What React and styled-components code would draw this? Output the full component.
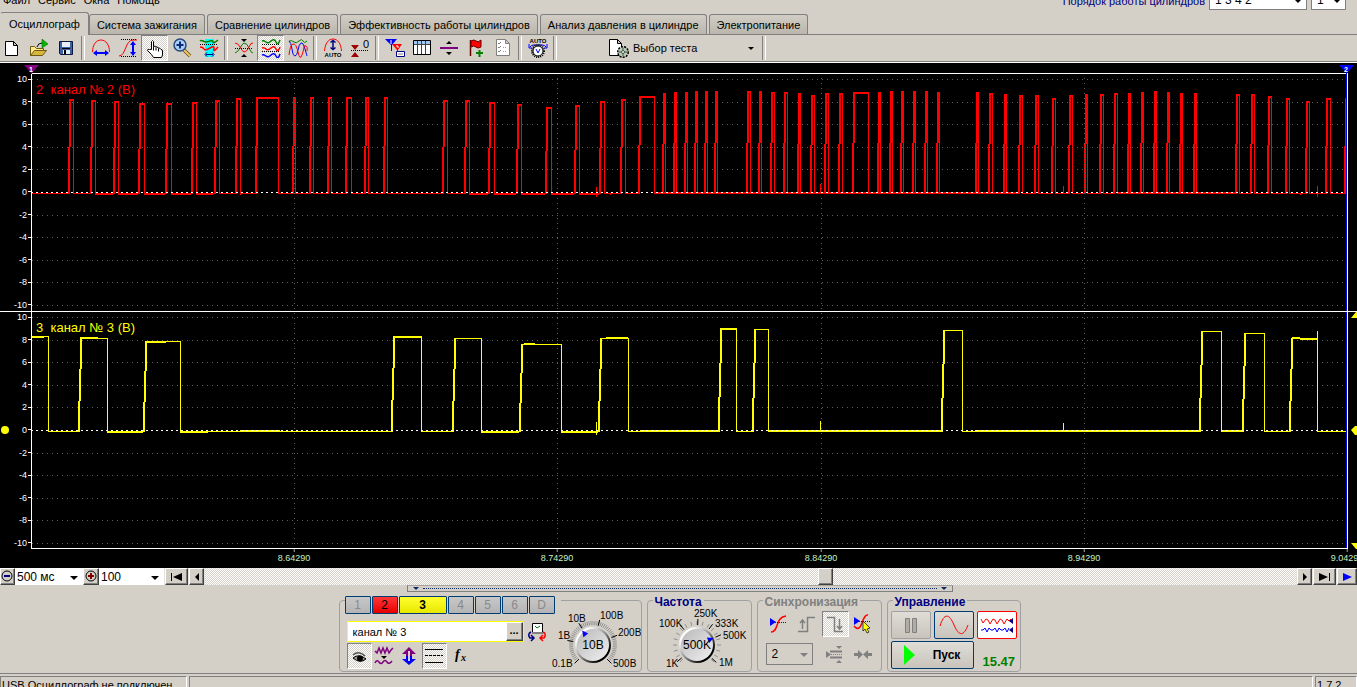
import React, { useState } from 'react';
import styled, { createGlobalStyle, css } from 'styled-components';

const GlobalStyle = createGlobalStyle`
  * {
    box-sizing: border-box;
  }

  body {
    margin: 0;
    background: #d4d0c8;
    font-family: "Liberation Sans", Arial, sans-serif;
    font-size: 11px;
    color: #000;
  }

  button, input, select {
    font: inherit;
    color: inherit;
    margin: 0;
  }
`;

const dither = css`
  background: repeating-conic-gradient(#ffffff 0 25%, #d4d0c8 0 50%) 0 0 / 2px 2px;
`;

const raised = css`
  background: #d4d0c8;
  border: 1px solid;
  border-color: #ffffff #404040 #404040 #ffffff;
  box-shadow: inset -1px -1px 0 #808080;
`;

const Window = styled.div`
  height: 100vh;
  overflow: hidden;
  display: flex;
  flex-direction: column;

  > * {
    flex-shrink: 0;
  }
`;

/* ---------- header ---------- */

const Header = styled.header`
  height: 12px;
  padding: 0 11px 2px 3px;
  display: flex;
  align-items: flex-end;
  justify-content: space-between;
`;

const Menu = styled.nav`
  display: flex;
  gap: 8px;
  margin-bottom: 4px;
  font-size: 11px;
  line-height: 12px;

  a {
    color: #000;
    text-decoration: none;
  }
`;

const OrderGroup = styled.div`
  display: flex;
  align-items: flex-end;
  gap: 4px;
  color: #000080;

  label {
    line-height: 12px;
    margin-bottom: 3px;
  }
`;

const SelectBox = styled.span`
  position: relative;
  display: block;
  width: ${props => props.$width}px;
  height: ${props => props.$height}px;

  &::after {
    content: '';
    position: absolute;
    right: 5px;
    top: 50%;
    margin-top: -1px;
    border: 4px solid transparent;
    border-top-color: ${props => props.$muted ? '#808080' : '#000'};
    border-bottom: 0;
    pointer-events: none;
  }

  select, input {
    display: block;
    width: 100%;
    height: 100%;
    appearance: none;
    border: ${props => props.$flat ? '0' : '1px solid #808080'};
    border-radius: 0;
    padding: 0 0 0 ${props => props.$flat ? 2 : 5}px;
    background: ${props => props.$muted ? '#d4d0c8' : '#fff'};
    color: #000;
    font-size: 12px;
    opacity: 1;
    outline: 0;
  }
`;

/* ---------- tabs ---------- */

const TabBar = styled.div`
  height: 23px;
  display: flex;
  align-items: flex-end;
  gap: 2px;
  border-bottom: 1px solid #808080;
`;

const Tab = styled.button`
  height: ${props => props.$active ? 23 : 20}px;
  margin: ${props => props.$active ? '0 -2px -1px 0' : '0'};
  padding: 0 ${props => props.$active ? 8 : 7}px;
  white-space: nowrap;
  border: 1px solid #808080;
  border-bottom: 0;
  border-left-color: ${props => props.$active ? '#d4d0c8' : '#808080'};
  border-radius: 3px 3px 0 0;
  background: ${props => props.$active ? '#d4d0c8' : 'linear-gradient(#d2cec6, #bab6ac)'};
`;

/* ---------- toolbar ---------- */

const Toolbar = styled.div`
  height: 28px;
  display: flex;
  align-items: center;
  border-bottom: 1px solid #fff;
  box-shadow: inset 0 -1px 0 #808080;
  margin-left: -2px;
  padding-bottom: 1px;
`;

const ToolButton = styled.button`
  width: ${props => props.$width || 27}px;
  height: 26px;
  padding: 0;
  display: flex;
  align-items: center;
  justify-content: center;
  border: 1px solid transparent;
  background: none;

  ${props => props.$pressed && css`
    ${dither}
    border-color: #808080 #fff #fff #808080;
  `}
`;

const Separator = styled.span`
  width: 8px;
  height: 24px;
  display: flex;
  justify-content: center;

  &::before {
    content: '';
    width: 2px;
    border-left: 1px solid #808080;
    border-right: 1px solid #fff;
  }
`;

const TestButton = styled.button`
  width: 201px;
  height: 26px;
  padding: 0 6px 0 50px;
  display: flex;
  align-items: center;
  gap: 4px;
  border: 0;
  background: none;

  span {
    flex: 1;
    text-align: left;
  }
`;

const DownArrow = styled.i`
  border: 3px solid transparent;
  border-top-color: #000;
  border-bottom: 0;
`;

/* ---------- plot ---------- */

const Plot = styled.section`
  position: relative;
  background: #000;
  padding-top: 10px;
  overflow: hidden;
`;

const Channel = styled.div`
  position: relative;
  display: grid;
  grid-template-columns: 31px 1fr 9px;
  height: 238px;

  &::before {
    content: '';
    position: absolute;
    top: 0;
    left: ${props => props.$first ? 31 : 0}px;
    right: ${props => props.$first ? 9 : 0}px;
    height: 1px;
    background: #fff;
  }
`;

const Scale = styled.ol`
  margin: 0;
  padding: 0;
  list-style: none;
  display: flex;
  flex-direction: column;
  justify-content: space-between;
  color: #fff;
  font-size: 9px;
  line-height: 12px;

  li {
    display: flex;
    align-items: center;
    justify-content: flex-end;
    gap: 1px;
    height: 12px;
  }

  li::after {
    content: '';
    width: 3px;
    height: 1px;
    background: #fff;
  }
`;

const Trace = styled.svg`
  display: block;
  width: 100%;
  height: 238px;
`;

const ChannelName = styled.span`
  position: absolute;
  left: 36px;
  top: 9px;
  color: ${props => props.$color};
  font-size: 13px;
  line-height: 16px;
  white-space: pre;
`;

const TimeAxis = styled.div`
  position: relative;
  height: 19px;
  margin: 0 9px 0 31px;
`;

const TimeMark = styled.span`
  position: absolute;
  top: 0;
  transform: translateX(-50%);
  padding-top: 4px;
  color: #c8f0c0;
  font-size: 9px;
  line-height: 11px;

  &::before {
    content: '';
    position: absolute;
    top: 0;
    left: 50%;
    width: 1px;
    height: 3px;
    background: #a0a0a0;
  }
`;

const Cursor = styled.svg`
  position: absolute;
  top: 2px;
  ${props => props.$side}: ${props => props.$offset}px;
`;

const LevelMark = styled.svg`
  position: absolute;
  ${props => props.$side}: 0;
  top: ${props => props.$top}px;
`;

/* ---------- time scroll ---------- */

const ScrollRow = styled.div`
  height: 17px;
  display: flex;
  gap: 1px;
  background: #e4e2dc;
`;

const SmallButton = styled.button`
  ${raised}
  width: ${props => props.$width}px;
  height: 17px;
  padding: 0;
  display: flex;
  align-items: center;
  justify-content: center;
`;

const ScrollBar = styled.input`
  flex: 1;
  min-width: 0;
  height: 17px;
  appearance: none;
  ${dither}

  &::-webkit-slider-thumb {
    appearance: none;
    width: 15px;
    height: 17px;
    ${raised}
  }
`;

/* ---------- control panels ---------- */

const Controls = styled.main`
  height: 89px;
  padding-left: 2px;
  display: flex;
  flex-direction: column;
  align-items: center;
  border-bottom: 1px solid #808080;
`;

const Splitter = styled.div`
  width: 546px;
  max-width: 100%;
  height: 7px;
  padding: 0 5px;
  display: flex;
  align-items: center;
  gap: 4px;
  border: 1px solid #808080;
  border-top-color: #a8a49c;

  &::before, &::after {
    content: '';
    border: 3px solid transparent;
    border-top-color: #0a246a;
    border-bottom: 0;
  }

  span {
    flex: 1;
    border-top: 1px dotted #0a246a;
  }
`;

const Panels = styled.div`
  margin-top: 8px;
  display: flex;
  gap: 5px;
`;

const Panel = styled.fieldset`
  position: relative;
  width: ${props => props.$width}px;
  height: 72px;
  min-width: 0;
  margin: 0;
  padding: ${props => props.$pad || '10px 3px 0'};
  border: 1px solid #a0a0a0;
  border-radius: 4px;
`;

const Legend = styled.legend`
  position: absolute;
  top: -6px;
  left: 5px;
  padding: 0 2px;
  background: #d4d0c8;
  color: ${props => props.$color};
  font-size: 12px;
  font-weight: bold;
  line-height: 14px;
`;

const ChannelTabs = styled.div`
  position: absolute;
  top: -5px;
  left: 5px;
  padding-right: 6px;
  display: flex;
  gap: 1px;
  background: #d4d0c8;
`;

const ChannelTab = styled.button`
  width: ${props => props.$selected ? 48 : 26}px;
  height: 18px;
  padding: 0;
  border: 1px solid #003c74;
  border-radius: 1px;
  background: ${props => props.$fill || 'linear-gradient(#c8c8c8, #b4b4b4)'};
  color: ${props => props.$fill ? '#000' : '#8a8a8a'};
  font-size: 12px;
  font-weight: ${props => props.$selected ? 'bold' : 'normal'};
  line-height: 16px;
`;

const ChannelBody = styled.div`
  display: flex;
  justify-content: space-between;
`;

const Stack = styled.div`
  display: flex;
  flex-direction: column;
  gap: ${props => props.$gap}px;
  padding: ${props => props.$pad};
`;

const Row = styled.div`
  display: flex;
  align-items: center;
  gap: ${props => props.$gap || 0}px;
`;

const NameField = styled.div`
  width: 177px;
  height: 21px;
  display: flex;
  border: 1px solid #ffff00;
  background: #fff;

  input {
    flex: 1;
    min-width: 0;
    padding: 0 0 0 5px;
    border: 0;
    background: none;
    outline: 0;
  }

  button {
    ${raised}
    width: 17px;
    padding: 0 0 4px;
    font-weight: bold;
    line-height: 10px;
  }
`;

const Dial = styled.svg`
  display: block;
  font-size: 10px;
`;

const FlatButton = styled.button`
  width: ${props => props.$width || 40}px;
  height: 28px;
  padding: 0;
  display: flex;
  align-items: center;
  justify-content: center;
  gap: 18px;
  border: 1px solid ${props => props.$edge || '#003c74'};
  border-radius: 2px;
  background: ${props => props.$white ? '#fff' : 'linear-gradient(#e0ddd7, #c8c4bc)'};
  font-size: 12px;
  font-weight: bold;
`;

const ControlGrid = styled.div`
  display: grid;
  grid-template-columns: 40px 40px 40px;
  gap: 2px 3px;

  > :nth-child(4) {
    grid-column: span 2;
  }
`;

const Voltage = styled.output`
  align-self: end;
  padding-left: 6px;
  color: #008000;
  font-size: 13px;
  font-weight: bold;
`;

/* ---------- status ---------- */

const StatusBar = styled.footer`
  height: 22px;
  padding-top: 2px;
  display: grid;
  grid-template-columns: 187px 1fr 42px;
  gap: 2px;

  span {
    padding: 2px 1px;
    line-height: 12px;
    border: 1px solid;
    border-color: #808080 #fff #fff #808080;
    white-space: nowrap;
  }
`;

/* ---------- icons ---------- */

const glyphs = {
  page: (
    <path d="M3.500 3.500h8l4 4v10h-12zM11.500 3.500v4h4" fill="#fff" stroke="#000" />
  ),
  open: (
    <>
      <path d="M1.500 17.500v-9h4l2 2h7v3" fill="#ffe98a" stroke="#6b5a10" />
      <path d="M1.500 17.500l4-5h12l-4 5z" fill="#d8b83c" stroke="#6b5a10" />
      <path d="M13 1l6 5-6 4z" fill="#00b800" stroke="#006000" strokeWidth=".5" />
      <path d="M8 9q1-4 5-4" fill="none" stroke="#000" />
    </>
  ),
  save: (
    <>
      <path d="M3.500 3.500h13v13h-12l-1-1z" fill="#3b5fa0" stroke="#101838" />
      <path d="M6 4h8v5H6zM7 12h7v4H7z" fill="#e8eef8" />
      <path d="M6 10h8v1H6zM8 12h2v4H8z" fill="#000" />
    </>
  ),
  period: (
    <>
      <path d="M1.500 14C1.500 7 5 2 10 2s8.500 5 8.500 12" fill="none" stroke="#f00" />
      <path d="M2 15l4-3v2h8v-2l4 3-4 3v-2H6v2z" fill="#00f" />
    </>
  ),
  amplitude: (
    <>
      <path d="M1 18c7 0 6-16 14-16h4" fill="none" stroke="#f00" />
      <path d="M3 1.500h16M3 18.500h16" stroke="#000" strokeDasharray="1 1" />
      <path d="M15 3l3 4h-2v7h2l-3 4-3-4h2V7h-2z" fill="#00f" />
    </>
  ),
  hand: (
    <path
      d="M6.500 11.500V3.500q1-2 2 0v5q2-1 2 .5 2-1 2.500 1 2-.5 3 1.500 1.500 0 1.500 1.500v4l-1 2.500h-8l-2-3-4-4q0-2 2-1zM8.500 8.500v4M11 9.500v3M13.500 10.500v3"
      fill="#fff"
      stroke="#000"
    />
  ),
  zoom: (
    <>
      <path d="M12 12l6 6" stroke="#6a4a10" strokeWidth="3.500" />
      <path d="M12 12l6 6" stroke="#f0c860" strokeWidth="2" />
      <circle cx="8" cy="7" r="6" fill="#a8d0f8" stroke="#284878" strokeWidth="1.500" />
      <path d="M4.500 7h7M8 3.500v7" stroke="#102878" strokeWidth="2" />
    </>
  ),
  window: (
    <>
      <path d="M6 1h9v18H6z" fill="#00ffff" />
      <path d="M1 3q1-1 3 0t3 1 4-1 3 1 5-2" fill="none" stroke="#008000" strokeWidth="1.500" />
      <path d="M1 6.500h18" stroke="#000" strokeDasharray="1 1" />
      <path d="M1 9q3 0 4 2t6-1 4 1 4-2" fill="none" stroke="#f00" strokeWidth="1.500" />
      <path d="M7 16.500h7M8 14.500l-2 2 2 2M13 14.500l2 2-2 2" fill="none" stroke="#00008b" />
    </>
  ),
  center: (
    <>
      <path d="M7 1h6l-3 3zM7 19h6l-3-3z" fill="#000" />
      <path d="M1 15q3-1 5-5t4-5q3 0 5 5t4 5" fill="none" stroke="#008000" />
      <path d="M1 5q3 0 5 4t4 5q3 0 5-5t4-4" fill="none" stroke="#f00" />
      <path d="M1 10.500h18" stroke="#000" strokeDasharray="1 1" />
    </>
  ),
  stacked: (
    <>
      <path d="M1 3q2-1 4 1t5-1 5 1 4-2" fill="none" stroke="#008000" strokeWidth="1.500" />
      <path d="M1 10q2-1 4 1t5-1 5 1 4-2" fill="none" stroke="#f00" strokeWidth="1.500" />
      <path d="M1 17q2-1 4 1t5-1 5 1 4-2" fill="none" stroke="#00f" strokeWidth="1.500" />
      <path d="M1 6.500h18M1 13.500h18" stroke="#000" strokeDasharray="1 1" />
    </>
  ),
  overlay: (
    <>
      <path d="M1 3q3-1 5 1t5-1 4 0 4 0" fill="none" stroke="#008000" />
      <path d="M1 3q2 1 3 8t3 7 3-6 3-7 4 6 2 7" fill="none" stroke="#00f" />
      <path d="M1 17q1-10 4-11t5 8 4 3 2-8 2-1 1 5" fill="none" stroke="#f00" />
    </>
  ),
  autoPeriod: (
    <>
      <path d="M1.500 13C2 6 5 1 10 1s8 5 8.500 12" fill="none" stroke="#f00" />
      <path d="M10 2v10M7.500 4.500l2.500-2 2.500 2M7.500 9.500l2.500 2 2.500-2" fill="none" stroke="#000080" strokeWidth="1.500" />
      <text x="10" y="19" fontSize="6" fontWeight="bold" textAnchor="middle">AUTO</text>
    </>
  ),
  zero: (
    <>
      <path d="M1 7h8l-4 5zM1 19h8l-4-5z" fill="#a00000" />
      <path d="M1 12.500h18" stroke="#000" strokeDasharray="1 1" />
      <text x="13" y="10" fontSize="11">0</text>
    </>
  ),
  markers: (
    <>
      <path d="M0 1h12L7 7v6H6V7z" fill="#00f" />
      <path d="M7 6h10l-4 6v6h-1v-6z" fill="#f00" />
      <path d="M11.500 13.500h8v5h-8z" fill="#fff" stroke="#00008b" />
      <path d="M13 16h5" stroke="#808080" />
      <path d="M6 2v4M11 8h2v2" fill="none" stroke="#fff" />
    </>
  ),
  table: (
    <>
      <path d="M1.500 2.500h17v14h-17z" fill="#fff" stroke="#000" />
      <path d="M2 3h16v3H2z" fill="#a0c8f0" />
      <path d="M2 6.500h16M5.500 3v13M9.500 3v13M13.500 3v13" stroke="#404040" />
    </>
  ),
  divider: (
    <>
      <path d="M1 9h18v2H1z" fill="#800080" />
      <path d="M10 3l3 3H7zM7 14h6l-3 3z" fill="#000" />
    </>
  ),
  flag: (
    <>
      <path d="M4.500 2v16" stroke="#600" strokeWidth="1.500" />
      <path d="M5 3q3-2 5 0t5-1v7q-3 2-5 0t-5 0z" fill="#f00" stroke="#600" />
      <path d="M10 15h7M13.500 12v7" stroke="#008000" strokeWidth="2" />
    </>
  ),
  checklist: (
    <>
      <path d="M3.500 1.500h9l4 4v12h-13zM12.500 1.500v4h4" fill="#fff" stroke="#808080" />
      <path d="M5 5l1 1 2-2M5 9l1 1 2-2M5 13l1 1 2-2" fill="none" stroke="#808080" />
      <path d="M10 9.500h4M10 13.500h4" stroke="#a0a0a0" strokeDasharray="1 1" />
    </>
  ),
  autoV: (
    <>
      <text x="10" y="5" fontSize="6" fontWeight="bold" textAnchor="middle">AUTO</text>
      <path d="M2 9q1-2 4-2h8q3 0 4 2M1 6v4h3M19 6v4h-3" fill="none" stroke="#00f" />
      <circle cx="10" cy="13" r="6" fill="none" stroke="#000" strokeWidth="2" strokeDasharray="1 1" />
      <circle cx="10" cy="13" r="5" fill="#fff" stroke="#000" />
      <path d="M8 11l2 4 2-4" fill="none" stroke="#00f" />
    </>
  ),
  test: (
    <>
      <path d="M.500 1.500h8l4 4v12h-12zM8.500 1.500v4h4" fill="#fff" stroke="#000" />
      <circle cx="14" cy="14" r="5" fill="#b8ccb8" stroke="#000" strokeWidth="2" strokeDasharray="2 1" />
      <circle cx="14" cy="14" r="4.500" fill="#b8ccb8" />
      <path d="M10 14h8M14 10v8" stroke="#405040" strokeDasharray="2 1" />
      <circle cx="14" cy="14" r="1.500" fill="#fff" stroke="#405040" />
    </>
  ),
  transfer: (
    <>
      <path d="M5.500 1.500h10v9h-10z" fill="#fff" stroke="#000" />
      <path d="M5 10h11v2H5z" fill="#808080" />
      <path d="M8 4l2 2 3-2" fill="none" stroke="#008000" />
      <path d="M4 10q-4 2-1 6h3M4 13l3 3-3 3" fill="none" stroke="#000080" strokeWidth="1.500" />
      <path d="M16 10q4 2 1 6h-3M16 13l-3 3 3 3" fill="none" stroke="#f00" strokeWidth="1.500" />
    </>
  ),
  eye: (
    <>
      <path d="M4 9q6-5 12 1" fill="none" stroke="#505050" strokeWidth="1.500" />
      <path d="M4 12q6-5 13 1-6 5-13-1z" fill="#a09c94" stroke="#000" />
      <circle cx="11" cy="12.500" r="3" fill="#000" />
    </>
  ),
  smooth: (
    <>
      <path d="M1 5l2 2 2-5 2 5 2-5 2 5 2-5 2 5 2-3 2-2M1 17q2-4 4-1t4 0 4 0 5-1" fill="none" stroke="#800080" strokeWidth="1.500" />
      <path d="M7 10h6l-3 3z" fill="#000" />
    </>
  ),
  invert: (
    <>
      <path d="M10 1l7 7h-4v3H7V8H3z" fill="#800080" />
      <path d="M7 10h6v3h4l-7 6-7-6h4z" fill="#00f" />
      <path d="M10 5v10" stroke="#d4d0c8" strokeWidth="2" />
    </>
  ),
  lines: (
    <>
      <path d="M1 3.500h18M1 16.500h18" stroke="#000" />
      <path d="M1 9.500h18" stroke="#000" strokeDasharray="3 1" />
    </>
  ),
  sync: (
    <>
      <path d="M2 18c8 0 4-15 15-16" fill="none" stroke="#f00" strokeWidth="1.500" />
      <path d="M1 4v8l6-4z" fill="#00f" />
      <path d="M6 8.500h12" stroke="#00f" strokeDasharray="1 1" />
    </>
  ),
  syncPick: (
    <>
      <path d="M1 12q5 6 8-3t6-8" fill="none" stroke="#f00" strokeWidth="1.500" />
      <path d="M1 3v8l6-4z" fill="#00f" />
      <path d="M6 7.500h12" stroke="#00f" strokeDasharray="1 1" />
      <path d="M10 7l7 7-3 1 2 3-2 1-2-4-2 2z" fill="#ff0" stroke="#000" strokeWidth=".700" />
    </>
  ),
  rise: (
    <path d="M1 17.500h9.500v-14H18M5.500 15V7M3 9l2.500-3L8 9" fill="none" stroke="#808080" strokeWidth="1.500" />
  ),
  fall: (
    <path d="M2 3.500h7.500v14H18M14.500 5v9M12 12l2.500 3 2.500-3" fill="none" stroke="#808080" strokeWidth="1.500" />
  ),
  level: (
    <>
      <path d="M1 7v7l5-3.500z" fill="#808080" />
      <path d="M5 7.500h12M5 13.500h12" stroke="#808080" strokeWidth="2" />
      <path d="M6 10.500h11" stroke="#808080" strokeDasharray="1 1" />
      <path d="M11 2h6l-3 3zM11 19h6l-3-3z" fill="#808080" />
    </>
  ),
  squeeze: (
    <path d="M1 9h4V6l5 4.500L5 15v-3H1zM19 9h-4V6l-5 4.500 5 4.500v-3h4z" fill="#808080" />
  ),
};

const Icon = ({ name }) => (
  <svg width="20" height="20" viewBox="0 0 20 20" aria-hidden="true">
    {glyphs[name]}
  </svg>
);

/* ---------- signal data: rise, fall, top ---------- */

const crankPulses = [
  [68, 73, 99], [90, 95, 100], [113, 118, 101], [138, 144, 103], [165, 171, 103],
  [191, 196, 102], [214, 219, 100], [235, 240, 98], [255, 278, 97], [292, 295, 97],
  [309, 313, 97], [327, 331, 97], [345, 351, 97], [364, 368, 97], [383, 387, 97],
  [442, 447, 100], [464, 469, 100], [488, 494, 102], [516, 521, 104], [545, 551, 107],
  [574, 579, 105], [599, 604, 101], [620, 625, 99], [638, 654, 96], [662, 665, 93],
  [673, 676, 92], [684, 687, 92], [694, 697, 91], [704, 707, 91], [714, 717, 91],
  [746, 750, 91], [758, 761, 91], [770, 774, 92], [783, 787, 92], [797, 800, 93],
  [810, 814, 95], [824, 828, 93], [838, 842, 93], [852, 868, 92], [877, 880, 92],
  [889, 892, 91], [900, 903, 91], [912, 915, 91], [924, 927, 91], [936, 939, 92],
  [975, 978, 92], [988, 992, 93], [1003, 1006, 94], [1018, 1022, 95], [1034, 1038, 95],
  [1051, 1055, 98], [1068, 1072, 95], [1084, 1087, 94], [1099, 1103, 94], [1113, 1117, 93],
  [1127, 1130, 93], [1140, 1143, 92], [1153, 1156, 91], [1166, 1169, 92], [1179, 1182, 93],
  [1193, 1196, 93], [1235, 1239, 94], [1250, 1254, 94], [1267, 1271, 96], [1285, 1289, 98],
  [1305, 1309, 101], [1325, 1330, 98], [1344, 1348, 98],
];

const camPulses = [
  [28, 48, 336], [78, 107, 338], [143, 180, 341], [391, 421, 336], [452, 481, 338],
  [519, 561, 344], [598, 628, 338], [718, 736, 328], [752, 768, 329], [941, 962, 330],
  [1199, 1221, 331], [1242, 1264, 333], [1289, 1317, 338],
];

const box = (x, y, w, h) => `M${x - 31} ${y}h${w}v${h}h${-w}z`;

// runs are thickened stretches [from, to, y], spikes are [x, y, height]
const buildTrace = (pulses, base, steps, top, runs, spikes, origin) => {
  const parts = [];
  let last = 31;
  pulses.forEach(([x, fall, high]) => {
    if (x > last) parts.push(box(last, base - origin, x - last, 1));
    const rise = base - high + 1;
    for (let i = 0; i < steps; i++) {
      const from = Math.round((rise * i) / steps);
      const to = Math.round((rise * (i + 1)) / steps);
      const left = x + steps - 1 - i;
      if (left >= 31) parts.push(box(left, high - origin + from, 2, to - from));
    }
    const start = Math.max(31, x + steps - 1);
    parts.push(box(start, high - origin, fall - start + 1, top));
    parts.push(box(fall, high - origin, 1, rise));
    last = fall;
  });
  if (last < 1347) parts.push(box(last, base - origin, 1347 - last, 1));
  runs.forEach(([from, to, y]) => parts.push(box(from, y - origin, to - from, 2)));
  spikes.forEach(([x, y, h]) => parts.push(box(x, y - origin, 1, h)));
  return parts.join('');
};

const channels = [
  {
    id: 2,
    label: '2  канал № 2 (B)',
    color: '#ff0000',
    zero: 119,
    dotStart: 5,
    path: buildTrace(
      crankPulses, 193, 2, 2,
      [
        [95, 113, 193], [118, 138, 193], [144, 165, 193], [171, 191, 193], [196, 213, 193],
        [469, 488, 193], [494, 516, 193], [521, 545, 193], [551, 574, 193], [579, 599, 193],
        [654, 1018, 192], [1117, 1235, 192],
      ],
      [[596, 187, 10], [820, 184, 10], [1063, 186, 8], [1317, 186, 11], [240, 193, 2], [610, 193, 2], [1300, 193, 2]],
      73
    ),
  },
  {
    id: 3,
    label: '3  канал № 3 (B)',
    color: '#ffff00',
    zero: 119,
    dotStart: 2,
    path: buildTrace(
      camPulses, 431, 3, 1,
      [
        [107, 143, 431], [180, 208, 431], [481, 519, 431], [561, 598, 431],
        [240, 280, 430], [640, 718, 430], [768, 941, 430], [975, 1199, 430], [1222, 1242, 430],
        [31, 44, 336], [80, 98, 337], [147, 166, 341], [394, 421, 336], [524, 535, 343],
        [606, 628, 337], [720, 736, 328], [1292, 1300, 337], [1300, 1317, 338],
      ],
      [[596, 422, 13], [820, 421, 10], [1063, 423, 8], [1317, 331, 10]],
      311
    ),
  },
];

const scaleValues = [10, 8, 6, 4, 2, 0, -2, -4, -6, -8, -10];
const gridColumns = [263, 526, 790, 1053];
const timeMarks = [
  { x: 263, text: '8.64290' },
  { x: 526, text: '8.74290' },
  { x: 790, text: '8.84290' },
  { x: 1053, text: '8.94290' },
  { x: 1316, text: '9.04290' },
];

const ChannelPlot = ({ channel, first }) => (
  <Channel $first={first}>
    <Scale>
      {scaleValues.map(value => <li key={value}>{value}</li>)}
    </Scale>
    <Trace viewBox="0 0 1317 238" preserveAspectRatio="none" shapeRendering="crispEdges">
      {scaleValues.map((value, i) => {
        const y = Math.round(6 + i * 22.6) + 0.5;
        return <path key={value} d={`M1 ${y}H1315`} stroke="#606060" strokeDasharray="1 4" />;
      })}
      <path d={channel.path} fill={channel.color} />
      {gridColumns.map(x => (
        <path key={x} d={`M${x + 0.5} ${channel.dotStart}V238`} stroke="#606060" strokeDasharray="1 4" />
      ))}
      <path d={`M0 ${channel.zero + 0.5}H1315`} stroke="#fff" strokeDasharray="2 3" />
      <path d="M0 0h1v238H0zM1316 0h1v238h-1z" fill="#fff" />
      <path d="M1315 0h1v238h-1z" fill="#0000ff" />
      {!first && <path d="M0 237h1317v1H0z" fill="#fff" />}
    </Trace>
    <ChannelName $color={channel.color}>{channel.label}</ChannelName>
  </Channel>
);

const polar = (cx, cy, r, deg) => {
  const a = (deg * Math.PI) / 180;
  return `${(cx + r * Math.cos(a)).toFixed(1)} ${(cy + r * Math.sin(a)).toFixed(1)}`;
};

const Knob = ({ width, cx, value, labels, stops, step, pointer, label }) => {
  const cy = 38;
  const minor = [];
  for (let deg = 135; deg <= 405; deg += step) {
    minor.push(`M${polar(cx, cy, 20, deg)}L${polar(cx, cy, 24, deg)}`);
  }
  return (
    <Dial width={width} height="64" viewBox={`0 0 ${width} 64`} role="img" aria-label={label}>
      <defs>
        <linearGradient id={`rim${cx}`} x1="0" y1="0" x2="1" y2="1">
          <stop offset="0.2" stopColor="#fff" />
          <stop offset="0.5" stopColor="#909090" />
          <stop offset="0.8" stopColor="#000" />
        </linearGradient>
        <linearGradient id={`cap${cx}`} x1="0" y1="0" x2="1" y2="1">
          <stop offset="0" stopColor="#b8b8b8" />
          <stop offset="1" stopColor="#f0f0f0" />
        </linearGradient>
      </defs>
      <path d={minor.join('')} stroke="#909090" />
      <path d={stops.map(deg => `M${polar(cx, cy, 20, deg)}L${polar(cx, cy, 26, deg)}`).join('')} stroke="#000" />
      <circle cx={cx} cy={cy} r="18" fill={`url(#rim${cx})`} />
      <circle cx={cx} cy={cy} r="16" fill={`url(#cap${cx})`} />
      <path d="M18 0l-6-3v6z" fill="#0000ff" transform={`translate(${cx} ${cy}) rotate(${pointer})`} />
      {labels.map(([x, y, text]) => <text key={text} x={x} y={y}>{text}</text>)}
      <text x={cx} y={cy + 4} fontSize="12" textAnchor="middle">{value}</text>
    </Dial>
  );
};

const tabs = [
  'Осциллограф',
  'Система зажигания',
  'Сравнение цилиндров',
  'Эффективность работы цилиндров',
  'Анализ давления в цилиндре',
  'Электропитание',
];

const toolGroups = [
  [['page', 'Новый'], ['open', 'Открыть'], ['save', 'Сохранить']],
  [['period', 'Период'], ['amplitude', 'Амплитуда'], ['hand', 'Рука'], ['zoom', 'Масштаб'], ['window', 'Окно']],
  [['center', 'По центру'], ['stacked', 'Раздельно'], ['overlay', 'Вместе']],
  [['autoPeriod', 'Авто'], ['zero', 'Ноль']],
  [['markers', 'Маркеры'], ['table', 'Таблица'], ['divider', 'Линия'], ['flag', 'Флаг'], ['checklist', 'Список']],
  [['autoV', 'Авто В']],
];

const App = () => {
  const [activeTab, setActiveTab] = useState(tabs[0]);
  const [name, setName] = useState('канал № 3');
  const [position, setPosition] = useState(570);
  const pressed = ['hand', 'stacked'];

  return (
    <Window>
      <GlobalStyle />
      <Header>
        <Menu>
          <a href="#file">Файл</a>
          <a href="#service">Сервис</a>
          <a href="#windows">Окна</a>
          <a href="#help">Помощь</a>
        </Menu>
        <OrderGroup>
          <label htmlFor="order">Порядок работы цилиндров</label>
          <SelectBox $width={98} $height={20}>
            <select id="order"><option>1 3 4 2</option></select>
          </SelectBox>
          <SelectBox $width={35} $height={20}>
            <input aria-label="Цилиндр" defaultValue="1" />
          </SelectBox>
        </OrderGroup>
      </Header>

      <TabBar role="tablist">
        {tabs.map(tab => (
          <Tab
            key={tab}
            role="tab"
            aria-selected={tab === activeTab}
            $active={tab === activeTab}
            onClick={() => setActiveTab(tab)}
          >
            {tab}
          </Tab>
        ))}
      </TabBar>

      <Toolbar>
        {toolGroups.map((group, i) => (
          <React.Fragment key={i}>
            {group.map(([icon, label]) => (
              <ToolButton key={icon} aria-label={label} $pressed={pressed.includes(icon)}>
                <Icon name={icon} />
              </ToolButton>
            ))}
            <Separator />
          </React.Fragment>
        ))}
        <TestButton>
          <Icon name="test" />
          <span>Выбор теста</span>
          <DownArrow />
        </TestButton>
        <Separator />
      </Toolbar>

      <Plot>
        {channels.map((channel, i) => (
          <ChannelPlot key={channel.id} channel={channel} first={i === 0} />
        ))}
        <TimeAxis>
          {timeMarks.map(mark => (
            <TimeMark key={mark.text} style={{ left: `${(mark.x / 1317) * 100}%` }}>{mark.text}</TimeMark>
          ))}
        </TimeAxis>
        <Cursor $side="left" $offset={24} width="15" height="9">
          <path d="M0 0h15L8 8v1H7V8z" fill="#800080" />
          <text x="7" y="7" fontSize="7" fontWeight="bold" fill="#fff" textAnchor="middle">1</text>
        </Cursor>
        <Cursor $side="right" $offset={3} width="15" height="9">
          <path d="M0 0h15L8 8v1H7V8z" fill="#0000ff" />
          <text x="7" y="7" fontSize="7" fontWeight="bold" fill="#fff" textAnchor="middle">2</text>
        </Cursor>
        <LevelMark $side="left" $top={363} width="10" height="9">
          <circle cx="5" cy="4" r="4" fill="#ffff00" />
        </LevelMark>
        <LevelMark $side="right" $top={249} width="6" height="6">
          <path d="M0 6L5 0h1v6z" fill="#ffff00" />
        </LevelMark>
        <LevelMark $side="right" $top={363} width="6" height="9">
          <path d="M0 4L4 0h2v9H4z" fill="#ffff00" />
        </LevelMark>
        <LevelMark $side="right" $top={480} width="6" height="6">
          <path d="M0 0h6v6H5z" fill="#ffff00" />
        </LevelMark>
      </Plot>

      <ScrollRow>
        <Row>
          <SmallButton $width={15} aria-label="Уменьшить">
            <svg width="13" height="13"><circle cx="6" cy="6" r="5" fill="none" stroke="#000" /><path d="M3 5h6v2H3z" fill="#000080" /></svg>
          </SmallButton>
          <SelectBox $width={68} $height={17} $flat>
            <select aria-label="Развёртка"><option>500 мс</option></select>
          </SelectBox>
          <SmallButton $width={16} aria-label="Увеличить">
            <svg width="13" height="13"><circle cx="6" cy="6" r="5" fill="none" stroke="#000" /><path d="M3 5h2V3h2v2h2v2H7v2H5V7H3z" fill="#800000" /></svg>
          </SmallButton>
          <SelectBox $width={65} $height={17} $flat>
            <select aria-label="Масштаб"><option>100</option></select>
          </SelectBox>
        </Row>
        <SmallButton $width={23} aria-label="В начало">
          <svg width="11" height="8"><path d="M0 0h1v8H0zM11 0v8L2 4z" /></svg>
        </SmallButton>
        <SmallButton $width={15} aria-label="Назад">
          <svg width="4" height="8"><path d="M4 0v8L0 4z" /></svg>
        </SmallButton>
        <ScrollBar
          type="range"
          min="0"
          max="1000"
          value={position}
          aria-label="Время"
          onChange={e => setPosition(Number(e.target.value))}
        />
        <SmallButton $width={15} aria-label="Вперёд">
          <svg width="4" height="8"><path d="M0 0l4 4-4 4z" /></svg>
        </SmallButton>
        <SmallButton $width={23} aria-label="В конец">
          <svg width="11" height="8"><path d="M0 0l9 4-9 4zM10 0h1v8h-1z" /></svg>
        </SmallButton>
        <SmallButton $width={20} aria-label="Воспроизвести">
          <svg width="9" height="8"><path d="M0 0l9 4-9 4z" fill="#0000ff" /></svg>
        </SmallButton>
      </ScrollRow>

      <Controls>
        <Splitter><span /></Splitter>
        <Panels>
          <Panel $width={303} $pad="6px 0 0 7px">
            <ChannelTabs>
              <ChannelTab>1</ChannelTab>
              <ChannelTab $fill="linear-gradient(#ff3838, #e80000)">2</ChannelTab>
              <ChannelTab $selected $fill="linear-gradient(#ffff30, #e8e800)">3</ChannelTab>
              <ChannelTab>4</ChannelTab>
              <ChannelTab>5</ChannelTab>
              <ChannelTab>6</ChannelTab>
              <ChannelTab>D</ChannelTab>
            </ChannelTabs>
            <ChannelBody>
              <Stack $gap={1} $pad="14px 0 0">
                <Row $gap={3}>
                  <NameField>
                    <input aria-label="Имя канала" value={name} onChange={e => setName(e.target.value)} />
                    <button aria-label="Выбрать">...</button>
                  </NameField>
                  <Icon name="transfer" />
                </Row>
                <Row>
                  <ToolButton $width={25} aria-label="Видимость" $pressed><Icon name="eye" /></ToolButton>
                  <ToolButton $width={25} aria-label="Сглаживание"><Icon name="smooth" /></ToolButton>
                  <ToolButton $width={25} aria-label="Инверсия"><Icon name="invert" /></ToolButton>
                  <ToolButton $width={25} aria-label="Линии" $pressed><Icon name="lines" /></ToolButton>
                  <ToolButton $width={25} aria-label="Функция">
                    <svg width="20" height="20" fontFamily="Liberation Serif, serif" fontStyle="italic" fontWeight="bold">
                      <text x="6" y="13" fontSize="14">f</text>
                      <text x="12" y="15" fontSize="10">x</text>
                    </svg>
                  </ToolButton>
                </Row>
              </Stack>
              <Knob
                width={92}
                cx={44}
                value="10B"
                label="Чувствительность"
                step={5}
                stops={[135, 190, 237, 285, 338, 405]}
                pointer={233}
                labels={[[3, 60, '0.1B'], [9, 32, '1B'], [19, 15, '10B'], [51, 12, '100B'], [69, 29, '200B'], [64, 60, '500B']]}
              />
            </ChannelBody>
          </Panel>

          <Panel $width={105} $pad="6px 0 0 0">
            <Legend $color="#000080">Частота</Legend>
            <Knob
              width={103}
              cx={49}
              value="500K"
              label="Частота"
              step={15}
              stops={[140, 230, 272, 307, 337, 402]}
              pointer={337}
              labels={[[18, 60, '1K'], [11, 20, '100K'], [46, 10, '250K'], [67, 20, '333K'], [75, 32, '500K'], [71, 59, '1M']]}
            />
          </Panel>

          <Panel $width={125}>
            <Legend $color="#808080">Синхронизация</Legend>
            <Stack $gap={4} $pad="0 0 0 5px">
              <Row $gap={1}>
                <ToolButton aria-label="Уровень"><Icon name="sync" /></ToolButton>
                <ToolButton aria-label="По фронту"><Icon name="rise" /></ToolButton>
                <ToolButton aria-label="По спаду" $pressed><Icon name="fall" /></ToolButton>
                <ToolButton aria-label="Указать"><Icon name="syncPick" /></ToolButton>
              </Row>
              <Row $gap={9}>
                <SelectBox $width={47} $height={22} $muted>
                  <select aria-label="Канал синхронизации"><option>2</option></select>
                </SelectBox>
                <Row $gap={1}>
                  <ToolButton aria-label="Гистерезис"><Icon name="level" /></ToolButton>
                  <ToolButton aria-label="Сжать"><Icon name="squeeze" /></ToolButton>
                </Row>
              </Row>
            </Stack>
          </Panel>

          <Panel $width={134} $pad="10px 3px 0">
            <Legend $color="#000080">Управление</Legend>
            <ControlGrid>
              <FlatButton $edge="#a0a0a0" aria-label="Пауза">
                <svg width="12" height="15"><path d="M.500.500h4v14h-4zM7.500.500h4v14h-4z" fill="#b0aca4" stroke="#808080" /></svg>
              </FlatButton>
              <FlatButton aria-label="Синус">
                <svg width="30" height="20"><path d="M1 11C5-2 10-2 15 10s10 11 14 0" fill="none" stroke="#f00" /></svg>
              </FlatButton>
              <FlatButton $edge="#ff0000" $white aria-label="Сигналы">
                <svg width="34" height="18" fill="none">
                  <path d="M1 3l2 4 3-4 2 1 2 4 3-5 2 1 2 4 3-5 2 1 2 4 3-5 2 2 2-2" stroke="#f00" />
                  <path d="M1 14h2l2-2 2 4 2-4 2 2h2l2-2 2 4 2-4 2 2h2l2-2 2 4 2-4" stroke="#00f" />
                  <path d="M33 2v6l-4-3zM33 11v6l-4-3z" fill="#000080" />
                </svg>
              </FlatButton>
              <FlatButton $width={83}>
                <svg width="11" height="20"><path d="M0 0l11 10L0 20z" fill="#00ff00" /></svg>
                Пуск
              </FlatButton>
              <Voltage>15.47</Voltage>
            </ControlGrid>
          </Panel>
        </Panels>
      </Controls>

      <StatusBar>
        <span>USB Осциллограф не подключен</span>
        <span />
        <span>1.7.2</span>
      </StatusBar>
    </Window>
  );
};

export default App;
